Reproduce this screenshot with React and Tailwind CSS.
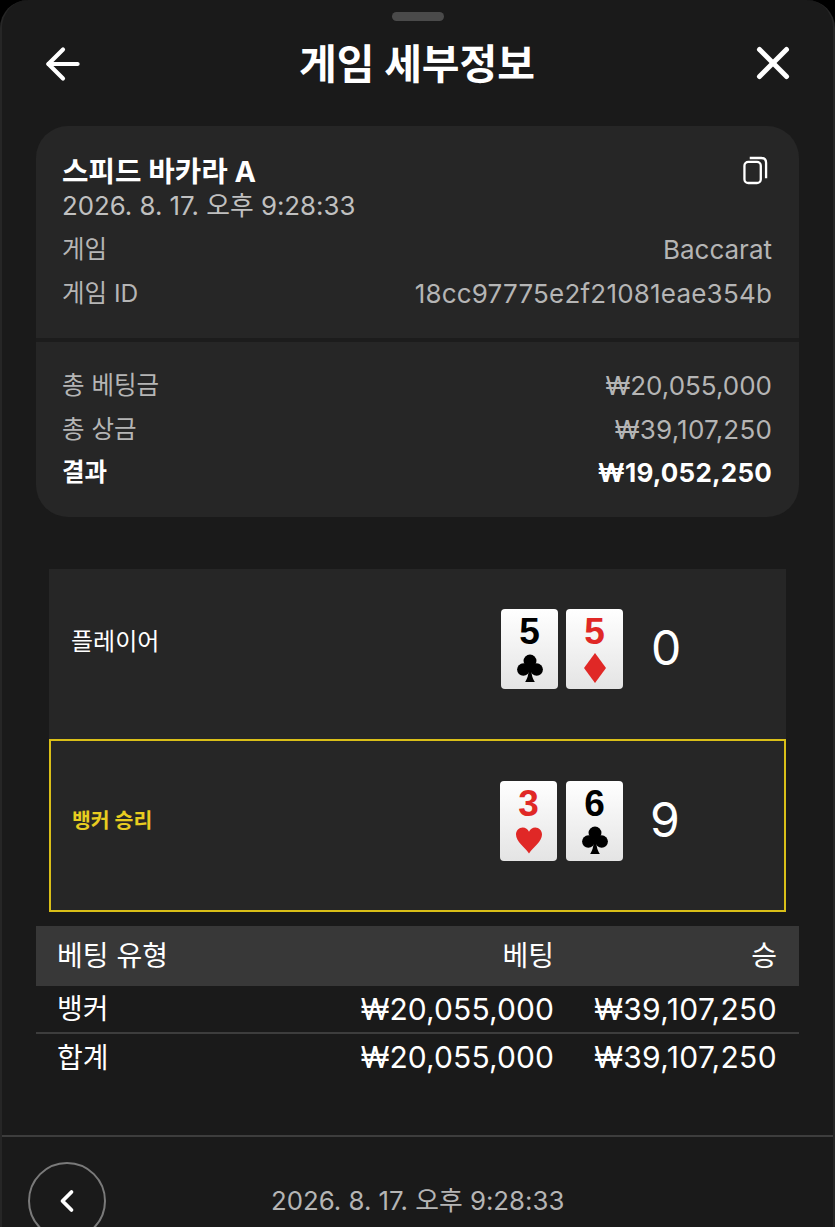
import { ArrowLeft, X, ChevronLeft } from "lucide-react";

const Club = () => (
    <svg viewBox="0 0 24 26" className="w-[26px] h-[28px] fill-black">
        <circle cx="12" cy="6.500" r="6" />
        <circle cx="5.800" cy="14.500" r="5.800" />
        <circle cx="18.200" cy="14.500" r="5.800" />
        <path d="M11 10h2c0 7 .8 12 3.500 16h-9C10.200 22 11 17 11 10z" />
    </svg>
);

const Diamond = () => (
    <svg viewBox="0 0 22 30" className="w-[22px] h-[30px] fill-[#e02826]">
        <path d="M11 0l11 15-11 15L0 15z" />
    </svg>
);

const Heart = () => (
    <svg viewBox="0 0 24 24" className="w-[26px] h-[27px] fill-[#e02826]">
        <path d="M12 24C8 18 0 13 0 6.500 0 2.800 2.800 0 6.200 0 8.800 0 11 1.500 12 4c1-2.500 3.200-4 5.800-4C21.200 0 24 2.800 24 6.500 24 13 16 18 12 24z" />
    </svg>
);

const PlayingCard = ({ rank, red, children }) => (
    <div className="w-[57px] h-[80px] rounded-[4px] bg-gradient-to-b from-white to-[#e4e4e4] flex flex-col items-center pt-[4px]">
        <span className={`font-['Liberation_Sans'] text-[37px] leading-[38px] font-bold ${red ? "text-[#e02826]" : "text-black"}`}>{rank}</span>
        <div className="h-[32px] mt-[1px] flex items-center justify-center">{children}</div>
    </div>
);

const InfoRow = ({ label, value, bold }) => (
    <div className={`flex justify-between items-center h-[43.500px] ${bold ? "font-bold text-white" : "text-[#b5b5b5]"}`}>
        <span className="text-[24.500px]">{label}</span>
        <span className="text-[26px]">{value}</span>
    </div>
);

const HandRow = ({ label, score, highlight, children }) => (
    <div className={`bg-[#262626] flex ${highlight ? "h-[173px] border-2 border-[#d9bf18]" : "h-[170px]"}`}>
        <div className={highlight ? "w-[449px] pl-[21px] pt-[65px] text-[20.500px] font-bold text-[#e8cc20]" : "w-[452px] pl-[22px] pt-[55px] text-[24px] text-white"}>{label}</div>
        <div className={`flex ${highlight ? "gap-[9px] pt-[40px]" : "gap-[8px] pt-[40px]"}`}>{children}</div>
        <div className={`text-[48px] leading-[58px] text-white ${highlight ? "pl-[27px] pt-[50px]" : "pl-[28px] pt-[50px]"}`}>{score}</div>
    </div>
);

const BetRow = ({ type, bet, win, border }) => (
    <div className={`flex items-center pl-[21px] pr-[22px] text-[30px] text-white ${border ? "h-[48px] border-b-2 border-[#3d3d3d]" : "h-[47px]"}`}>
        <span className="flex-1 text-[28px]">{type}</span>
        <span className="w-[220px] text-right tracking-[0.1px]">{bet}</span>
        <span className="w-[223px] text-right tracking-[0.35px]">{win}</span>
    </div>
);

export default function App() {
    return (
        <div className="h-[1227px] overflow-hidden bg-black" style={{ fontFamily: '"Inter", "Noto Sans CJK KR", sans-serif' }}>
            <div className="h-[1240px] bg-[#1a1a1a] rounded-t-[28px] border-x-2 border-[#262626] flex flex-col">
                {/* handle */}
                <div className="flex justify-center pt-[12px]">
                    <div className="w-[52px] h-[9px] rounded-full bg-[#4a4a4a]"></div>
                </div>
                {/* header */}
                <div className="flex items-center justify-between h-[84px] pl-[36px] pr-[33px]">
                    <ArrowLeft className="w-[50px] h-[50px] mt-[1px] text-white" strokeWidth={2} />
                    <span className="text-[41px] mt-[3px] font-bold text-white">게임 세부정보</span>
                    <X className="w-[54px] h-[54px] text-white" strokeWidth={2.200} />
                </div>
                {/* summary card */}
                <div className="mx-[34px] mt-[21px] bg-[#262626] rounded-[32px] h-[391px] flex flex-col">
                    <div className="h-[216px] pl-[26px] pr-[27px] pt-[28px] border-b-4 border-[#1c1c1c]">
                        <div className="flex justify-between">
                            <div>
                                <div className="text-[28.800px] leading-[36px] font-bold text-white">스피드 바카라 A</div>
                                <div className="text-[25.800px] leading-[32px] text-[#c0c0c0]">2026. 8. 17. 오후 9:28:33</div>
                            </div>
                            <svg viewBox="0 0 26 30" fill="none" stroke="white" strokeWidth="2.400" className="w-[25px] h-[29px] mt-[2px] mr-[4px]">
                                <rect x="1.500" y="6" width="17" height="22" rx="4" />
                                <path d="M7 2h12c3 0 5 2 5 5v16" />
                            </svg>
                        </div>
                        <div className="mt-[6px]">
                            <InfoRow label="게임" value="Baccarat" />
                            <InfoRow label="게임 ID" value={<span className="tracking-[0.2px]">18cc97775e2f21081eae354b</span>} />
                        </div>
                    </div>
                    <div className="pl-[26px] pr-[27px] pt-[22px]">
                        <InfoRow label="총 베팅금" value="₩20,055,000" />
                        <InfoRow label="총 상금" value={<span className="tracking-[0.2px]">₩39,107,250</span>} />
                        <InfoRow label="결과" value={<span className="tracking-[0.2px]">₩19,052,250</span>} bold />
                    </div>
                </div>
                {/* hands */}
                <div className="mx-[47px] mt-[52px] flex flex-col">
                    <HandRow label="플레이어" score="0">
                        <PlayingCard rank="5"><Club /></PlayingCard>
                        <PlayingCard rank="5" red><Diamond /></PlayingCard>
                    </HandRow>
                    <HandRow label="뱅커 승리" score="9" highlight>
                        <PlayingCard rank="3" red><Heart /></PlayingCard>
                        <PlayingCard rank="6"><Club /></PlayingCard>
                    </HandRow>
                </div>
                {/* bets table */}
                <div className="mx-[34px] mt-[14px]">
                    <div className="h-[60px] bg-[#383838] flex items-center pl-[21px] pr-[22px] text-[28px] text-white">
                        <span className="flex-1">베팅 유형</span>
                        <span className="w-[220px] text-right">베팅</span>
                        <span className="w-[223px] text-right">승</span>
                    </div>
                    <BetRow type="뱅커" bet="₩20,055,000" win="₩39,107,250" border />
                    <BetRow type="합계" bet="₩20,055,000" win="₩39,107,250" />
                </div>
                {/* footer */}
                <div className="mt-[54px] border-t-2 border-[#3d3d3d] flex items-start pl-[26px] pt-[25px]">
                    <div className="w-[78px] h-[78px] rounded-full border-2 border-[#7a7a7a] flex items-center justify-center">
                        <ChevronLeft className="w-[36px] h-[36px] text-white" strokeWidth={2.500} />
                    </div>
                    <span className="ml-[165px] mt-[20px] text-[25.800px] text-[#b5b5b5]">2026. 8. 17. 오후 9:28:33</span>
                </div>
            </div>
        </div>
    );
}
